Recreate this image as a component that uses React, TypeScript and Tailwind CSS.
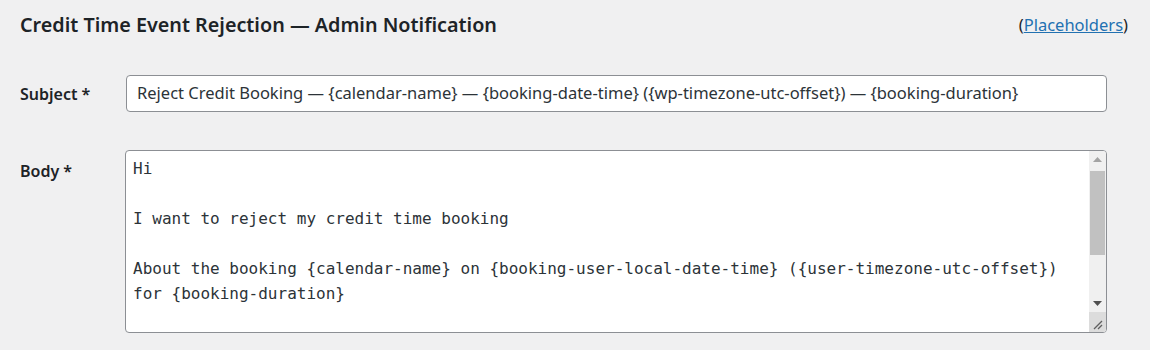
import React from "react";

const bodyLines = [
  "Hi",
  "",
  "I want to reject my credit time booking",
  "",
  "About the booking {calendar-name} on {booking-user-local-date-time} ({user-timezone-utc-offset})",
  "for {booking-duration}",
];

const FakeScrollbar = () => (
  <div className="flex w-[17px] shrink-0 flex-col bg-[#f0f0f0]">
    <div className="flex h-[17px] items-center justify-center">
      <svg width="9" height="5" viewBox="0 0 9 5">
        <polygon points="0,5 9,5 4.5,0" fill="#a3a3a3" />
      </svg>
    </div>
    <div className="mx-[1px] mt-[3px] h-[84px] bg-[#c1c1c1]" />
    <div className="flex-1" />
    <div className="flex h-[17px] items-center justify-center">
      <svg width="9" height="5" viewBox="0 0 9 5">
        <polygon points="0,0 9,0 4.5,5" fill="#505050" />
      </svg>
    </div>
    <div className="relative h-[20px] bg-[#dcdcdc]">
      <svg className="absolute bottom-[2px] right-[3px]" width="10" height="10" viewBox="0 0 10 10">
        <line x1="1" y1="9" x2="9" y2="1" stroke="#5f5f5f" strokeWidth="1.2" />
        <line x1="5" y1="9" x2="9" y2="5" stroke="#5f5f5f" strokeWidth="1.2" />
      </svg>
    </div>
  </div>
);

export default function App() {
  return (
    <div className="h-[350px] w-[1150px] bg-[#f0f0f1] pl-[20px] pr-[22px] font-['Noto_Sans',sans-serif] text-[#1d2327]">
      <div className="flex h-[50px] items-center justify-between">
        <h2 className="text-[19.75px] font-semibold">
          Credit Time Event Rejection — Admin Notification
        </h2>
        <span className="text-[16.5px]">
          (<a href="#" className="text-[#2271b1] underline">Placeholders</a>)
        </span>
      </div>

      <div className="mt-[25px] flex items-center">
        <label className="w-[106px] text-[16px] font-semibold">Subject *</label>
        <div className="flex h-[37px] w-[981px] items-center rounded-[4px] border border-[#8c8f94] bg-white px-[10px] text-[16.5px] text-[#2c3338]">
          Reject Credit Booking — {"{calendar-name}"} — {"{booking-date-time}"} ({"{wp-timezone-utc-offset}"}) — {"{booking-duration}"}
        </div>
      </div>

      <div className="mt-[38px] flex items-start">
        <label className="w-[105px] pt-[9px] text-[16px] font-semibold">Body *</label>
        <div className="flex h-[183px] w-[982px] overflow-hidden rounded-[4px] border border-[#8c8f94] bg-white">
          <div className="flex-1 whitespace-pre pl-[7px] pt-[5px] font-['DejaVu_Sans_Mono',monospace] text-[16px] leading-[25px] text-[#2c3338]">
            {bodyLines.map((l, i) => (
              <div key={i} className="h-[25px]">{l}</div>
            ))}
          </div>
          <FakeScrollbar />
        </div>
      </div>
    </div>
  );
}
